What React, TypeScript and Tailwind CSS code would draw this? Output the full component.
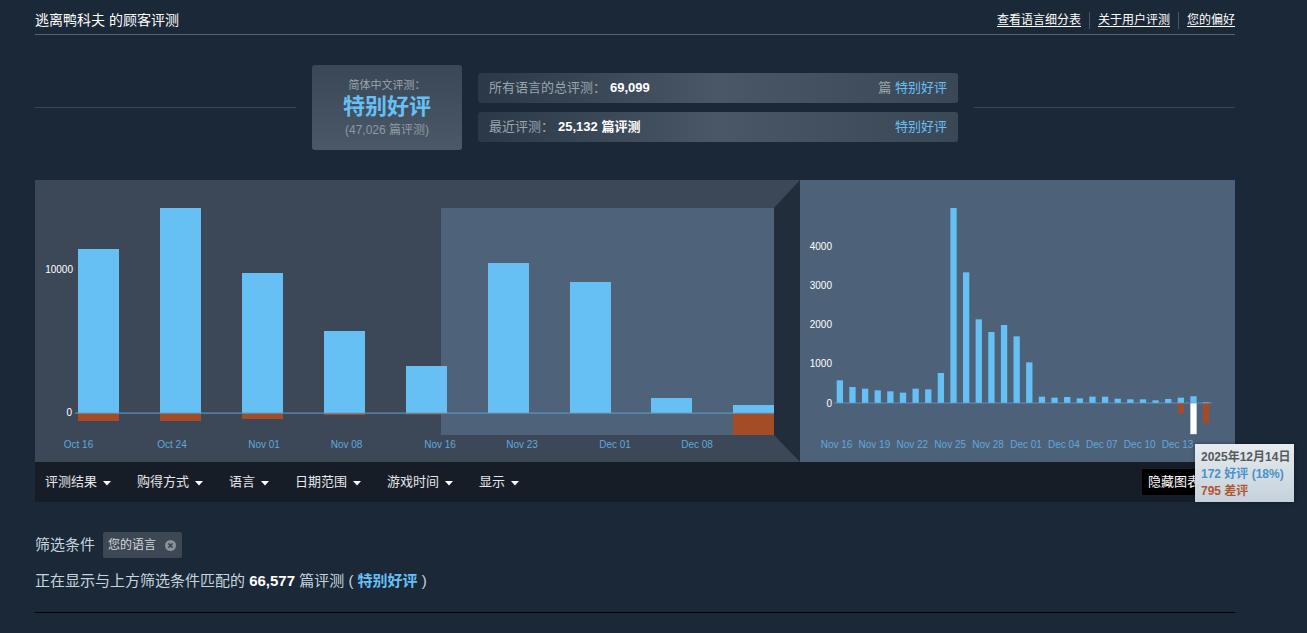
import React from 'react';

const BLUE = '#66c0f4';
const NEG = '#a34c25';

const leftBars = [
  { x: 43, top: 69, neg: 8 },
  { x: 125, top: 28, neg: 8 },
  { x: 207, top: 93, neg: 6 },
  { x: 289, top: 151, neg: 2 },
  { x: 371, top: 186, neg: 1.5 },
  { x: 453, top: 83, neg: 1 },
  { x: 535, top: 102, neg: 1 },
  { x: 616, top: 218, neg: 0.5 },
  { x: 698, top: 225, neg: 22 },
];

const leftLabels = [
  { t: 'Oct 16', x: 43.5 },
  { t: 'Oct 24', x: 137 },
  { t: 'Nov 01', x: 229 },
  { t: 'Nov 08', x: 311.5 },
  { t: 'Nov 16', x: 405 },
  { t: 'Nov 23', x: 487 },
  { t: 'Dec 01', x: 580 },
  { t: 'Dec 08', x: 662 },
];

const rightPos = [
  579, 408, 366, 323, 298, 264, 366, 349, 766, 4979, 3336, 2136, 1813, 1991, 1702, 1038, 162, 136,
  153, 119, 162, 162, 110, 94, 94, 68, 102, 136, 172, 17,
];
const rightNeg: Record<number, number> = { 27: 260, 28: 795, 29: 510 };
const rightLabels = ['Nov 16', 'Nov 19', 'Nov 22', 'Nov 25', 'Nov 28', 'Dec 01', 'Dec 04', 'Dec 07', 'Dec 10', 'Dec 13'];

const SCALE = 0.03917;

function Caret() {
  return (
    <svg width="8" height="5" viewBox="0 0 8 5" className="ml-[6px] mt-[2px]">
      <polygon points="0,0 8,0 4,4.5" fill="#ffffff" />
    </svg>
  );
}

function LeftChart() {
  const zero = 233;
  return (
    <svg width="765" height="282" className="block">
      <rect x="0" y="0" width="765" height="282" fill="#3c4858" />
      <rect x="406" y="28" width="333" height="227" fill="#4e6379" />
      <polygon points="739,28 765,0 765,282 739,255" fill="#222d3b" />
      {leftBars.map((b, i) => (
        <g key={i}>
          <rect x={b.x} y={b.top} width="41" height={zero - b.top} fill={BLUE} />
          <rect x={b.x} y={zero} width="41" height={b.neg} fill={NEG} />
        </g>
      ))}
      <rect x="40" y={zero - 0.5} width="699" height="1.2" fill="#5a9ccc" opacity="0.9" />
      <text x="38" y="89.5" textAnchor="end" dominantBaseline="central" fill="#ffffff" fontSize="10" fontFamily="Liberation Sans, Arial, sans-serif">
        10000
      </text>
      <text x="37" y="232" textAnchor="end" dominantBaseline="central" fill="#ffffff" fontSize="10" fontFamily="Liberation Sans, Arial, sans-serif">
        0
      </text>
      {leftLabels.map((l) => (
        <text key={l.t} x={l.x} y="264" textAnchor="middle" dominantBaseline="central" fill="#5fa8da" fontSize="10" fontFamily="Liberation Sans, Arial, sans-serif">
          {l.t}
        </text>
      ))}
    </svg>
  );
}

function RightChart() {
  const zero = 223;
  return (
    <svg width="435" height="282" className="block">
      <rect x="0" y="0" width="435" height="282" fill="#4d6279" />
      {rightPos.map((v, i) => {
        const x = 36.7 + i * 12.63;
        const h = v * SCALE;
        const n = rightNeg[i];
        return (
          <g key={i}>
            <rect x={x} y={zero - h} width="6.3" height={h} fill={i === 29 ? '#9fb3c4' : BLUE} />
            {n ? <rect x={x} y={zero} width="6.3" height={n * SCALE} fill={i === 28 ? '#ffffff' : NEG} /> : null}
          </g>
        );
      })}
      <rect x="34" y={zero - 0.5} width="378" height="1" fill="#5a9ccc" opacity="0.8" />
      {[0, 1000, 2000, 3000, 4000].map((v, k) => (
        <text key={v} x="32" y={zero - k * 39.17} textAnchor="end" dominantBaseline="central" fill="#ffffff" fontSize="10" fontFamily="Liberation Sans, Arial, sans-serif">
          {v}
        </text>
      ))}
      {rightLabels.map((t, i) => (
        <text key={t} x={36.5 + i * 37.9} y="264" textAnchor="middle" dominantBaseline="central" fill="#5fa8da" fontSize="10" fontFamily="Liberation Sans, Arial, sans-serif">
          {t}
        </text>
      ))}
    </svg>
  );
}

export default function App() {
  const filters = ['评测结果', '购得方式', '语言', '日期范围', '游戏时间', '显示'];
  return (
    <div className="min-h-[633px] w-full bg-[#1b2838] font-['Liberation_Sans','Noto_Sans_CJK_SC',sans-serif] overflow-hidden">
      <div className="ml-[35px] w-[1200px]">
        {/* header */}
        <div className="flex h-[35px] items-start justify-between border-b border-[#56626f] pt-[10px]">
          <div className="text-[14px] leading-[20px] text-white">逃离鸭科夫 的顾客评测</div>
          <div className="flex items-center text-[12px] leading-[20px] text-white">
            <span className="underline underline-offset-2">查看语言细分表</span>
            <span className="mx-[8px] h-[17px] w-px bg-[#4a5563]" />
            <span className="underline underline-offset-2">关于用户评测</span>
            <span className="mx-[8px] h-[17px] w-px bg-[#4a5563]" />
            <span className="underline underline-offset-2">您的偏好</span>
          </div>
        </div>

        {/* summary */}
        <div className="mt-[30px] flex h-[85px] items-center gap-[16px]">
          <div className="h-px flex-1 bg-[#3a4655]" />
          <div className="flex h-[85px] w-[150px] flex-col items-center justify-center rounded-[3px] bg-gradient-to-b from-[#3a4757] to-[#4a5868]">
            <div className="text-[11px] leading-[16px] text-[#9aa5ae]">简体中文评测：</div>
            <div className="text-[22px] font-bold leading-[28px] text-[#66c0f4]">特别好评</div>
            <div className="text-[12px] leading-[18px] text-[#8f98a0]">(47,026 篇评测)</div>
          </div>
          <div className="flex w-[480px] flex-col gap-[9px]">
            <div className="flex h-[30px] items-center justify-between rounded-[3px] bg-gradient-to-r from-[#2b3848] via-[#4a5767] to-[#3a4757] px-[11px] text-[13px]">
              <div className="flex items-center">
                <span className="text-[#9aa5ae]">所有语言的总评测：</span>
                <span className="ml-[4px] font-bold text-white">69,099</span>
              </div>
              <div>
                <span className="text-[#9aa5ae]">篇 </span>
                <span className="text-[#66c0f4]">特别好评</span>
              </div>
            </div>
            <div className="flex h-[30px] items-center justify-between rounded-[3px] bg-gradient-to-r from-[#2b3848] via-[#4a5767] to-[#3a4757] px-[11px] text-[13px]">
              <div className="flex items-center">
                <span className="text-[#9aa5ae]">最近评测：</span>
                <span className="ml-[4px] font-bold text-white">25,132 篇评测</span>
              </div>
              <span className="text-[#66c0f4]">特别好评</span>
            </div>
          </div>
          <div className="h-px flex-1 bg-[#3a4655]" />
        </div>

        {/* chart + filter bar */}
        <div className="relative mt-[30px]">
          <div className="flex h-[282px]">
            <LeftChart />
            <RightChart />
          </div>
          <div className="flex h-[40px] items-center bg-[#161d27] pl-[10px] text-[13px] text-[#e5e7e8]">
            <div className="flex items-center gap-[26px]">
              {filters.map((f) => (
                <div key={f} className="flex items-center">
                  <span>{f}</span>
                  <Caret />
                </div>
              ))}
            </div>
            <div className="ml-auto mr-[29px] flex h-[26px] items-center bg-black px-[6px] text-[13px] text-white">隐藏图表</div>
          </div>
          {/* tooltip */}
          <div className="absolute left-[1160px] top-[264px] h-[58px] w-[99px] bg-gradient-to-b from-[#e6ecf0] to-[#c5d1db] pl-[6px] pt-[5px] text-[12px] font-bold leading-[17px] shadow-[0_0_4px_rgba(0,0,0,0.4)]">
            <div className="whitespace-nowrap text-[#555a60]">2025年12月14日</div>
            <div className="whitespace-nowrap text-[#4a92c8]">172 好评 (18%)</div>
            <div className="whitespace-nowrap text-[#b0572f]">795 差评</div>
          </div>
        </div>

        {/* active filters */}
        <div className="mt-[30px] flex items-center">
          <span className="text-[15px] text-[#c6d4df]">筛选条件</span>
          <div className="ml-[8px] flex h-[26px] items-center rounded-[2px] bg-[#3e4855] pl-[5px] pr-[6px]">
            <span className="text-[12px] text-[#d2d9df]">您的语言</span>
            <svg width="11" height="11" viewBox="0 0 11 11" className="ml-[9px]">
              <circle cx="5.5" cy="5.5" r="5.5" fill="#8a929b" />
              <path d="M3.4 3.4 L7.6 7.6 M7.6 3.4 L3.4 7.6" stroke="#3e4855" strokeWidth="1.6" />
            </svg>
          </div>
        </div>
        <div className="mt-[13px] text-[15px] leading-[20px] text-[#c6d4df]">
          正在显示与上方筛选条件匹配的 <span className="font-bold text-white">66,577</span> 篇评测 ({' '}
          <span className="font-bold text-[#66c0f4]">特别好评</span> )
        </div>
        <div className="mt-[21px] h-px w-full bg-black" />
      </div>
    </div>
  );
}
